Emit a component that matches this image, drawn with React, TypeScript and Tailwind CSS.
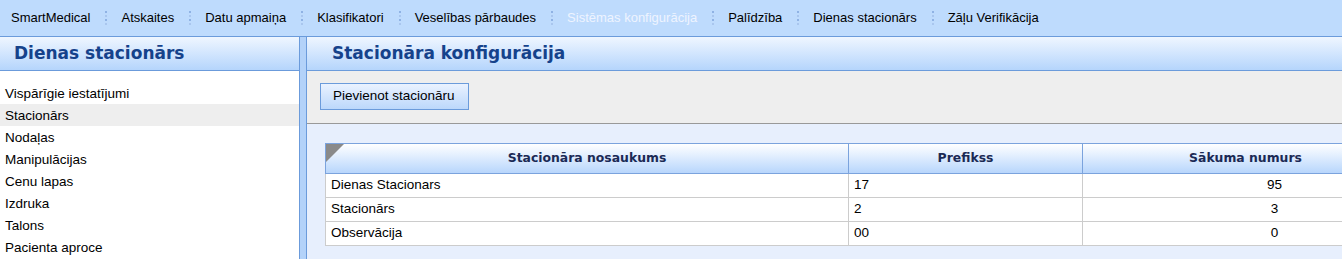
import React from 'react';

const menu = [
  'SmartMedical',
  'Atskaites',
  'Datu apmaiņa',
  'Klasifikatori',
  'Veselības pārbaudes',
  'Sistēmas konfigurācija',
  'Palīdzība',
  'Dienas stacionārs',
  'Zāļu Verifikācija',
];

const sideItems = [
  'Vispārīgie iestatījumi',
  'Stacionārs',
  'Nodaļas',
  'Manipulācijas',
  'Cenu lapas',
  'Izdruka',
  'Talons',
  'Pacienta aproce',
];

const rows = [
  { name: 'Dienas Stacionars', prefix: '17', start: '95' },
  { name: 'Stacionārs', prefix: '2', start: '3' },
  { name: 'Observācija', prefix: '00', start: '0' },
];

const boldFont = { fontFamily: '"DejaVu Sans", Verdana, sans-serif' };

function Separator() {
  return (
    <div className="flex flex-col gap-[2px] ml-[15px] mr-[14px]">
      <div className="w-[2px] h-[2px] bg-[#8fb2e4]" />
      <div className="w-[2px] h-[2px] bg-[#a9c6ee]" />
      <div className="w-[2px] h-[2px] bg-[#8fb2e4]" />
      <div className="w-[2px] h-[2px] bg-[#a9c6ee]" />
    </div>
  );
}

export default function App() {
  return (
    <div
      className="w-full h-[259px] overflow-hidden flex flex-col text-[13.5px] text-black bg-white"
      style={{ fontFamily: '"Liberation Sans", Arial, sans-serif' }}
    >
      {/* top menu */}
      <div className="h-[37px] shrink-0 bg-[#bedbfd] border-b border-[#6b9bdb] flex items-center pl-[11px] text-[13px]">
        {menu.map((m, i) => (
          <React.Fragment key={m}>
            {i > 0 && <Separator />}
            <span className={m === 'Sistēmas konfigurācija' ? 'text-[#eef4ff]' : 'text-black'}>{m}</span>
          </React.Fragment>
        ))}
      </div>

      <div className="flex-1 flex min-h-0">
        {/* left panel */}
        <div className="w-[299px] shrink-0 flex flex-col">
          <div className="h-[34px] shrink-0 bg-gradient-to-b from-[#eff6ff] to-[#b5d5fc] border-b border-[#6b9bdb] flex items-center pl-[14px]">
            <span className="font-bold text-[17px] text-[#15428b]" style={boldFont}>Dienas stacionārs</span>
          </div>
          <div className="flex-1 pt-[11px]">
            {sideItems.map((s) => (
              <div
                key={s}
                className={`h-[22px] flex items-center pl-[5px] pt-[3px] ${s === 'Stacionārs' ? 'bg-[#eeeeee]' : ''}`}
              >
                {s}
              </div>
            ))}
          </div>
        </div>

        {/* splitter */}
        <div className="w-[8px] shrink-0 bg-[#b3d2f9] border-x border-[#6b9bdb]" />

        {/* right panel */}
        <div className="flex-1 min-w-0 flex flex-col bg-[#e7effd]">
          <div className="h-[34px] shrink-0 bg-gradient-to-b from-[#eff6ff] to-[#b5d5fc] border-b border-[#6b9bdb] flex items-center pl-[25px]">
            <span className="font-bold text-[17px] text-[#15428b]" style={boldFont}>Stacionāra konfigurācija</span>
          </div>
          <div className="h-[53px] shrink-0 bg-[#eeeeee] border-b border-[#999999] pl-[13px] pt-[12px]">
            <button className="h-[27px] w-[149px] border border-[#6b9bdb] bg-gradient-to-b from-[#eaf2ff] to-[#bcd8fb] text-left pl-[12px] text-black">
              Pievienot stacionāru
            </button>
          </div>
          <div className="pl-[18px] pt-[19px]">
            <div className="w-[1084px]">
              <div
                className="relative flex h-[31px] bg-gradient-to-b from-[#ffffff] to-[#b8d6fc] border border-[#7ba3dd] font-bold text-[12.4px] text-[#1b2a55]"
                style={boldFont}
              >
                <div className="absolute left-0 top-0 w-0 h-0 border-t-[18px] border-r-[18px] border-t-[#8a8a8a] border-r-transparent" />
                <div className="w-[523px] flex items-center justify-center border-r border-[#7ba3dd]">Stacionāra nosaukums</div>
                <div className="w-[234px] flex items-center justify-center border-r border-[#7ba3dd]">Prefikss</div>
                <div className="flex-1 flex items-center justify-center">Sākuma numurs</div>
              </div>
              {rows.map((r) => (
                <div key={r.name} className="flex h-[24px] bg-white border-x border-b border-[#cccccc]">
                  <div className="w-[523px] flex items-center pl-[5px] border-r border-[#cccccc]">{r.name}</div>
                  <div className="w-[234px] flex items-center pl-[5px] border-r border-[#cccccc]">{r.prefix}</div>
                  <div className="flex-1 flex items-center justify-center pl-[58px]">{r.start}</div>
                </div>
              ))}
            </div>
          </div>
        </div>
      </div>
    </div>
  );
}
